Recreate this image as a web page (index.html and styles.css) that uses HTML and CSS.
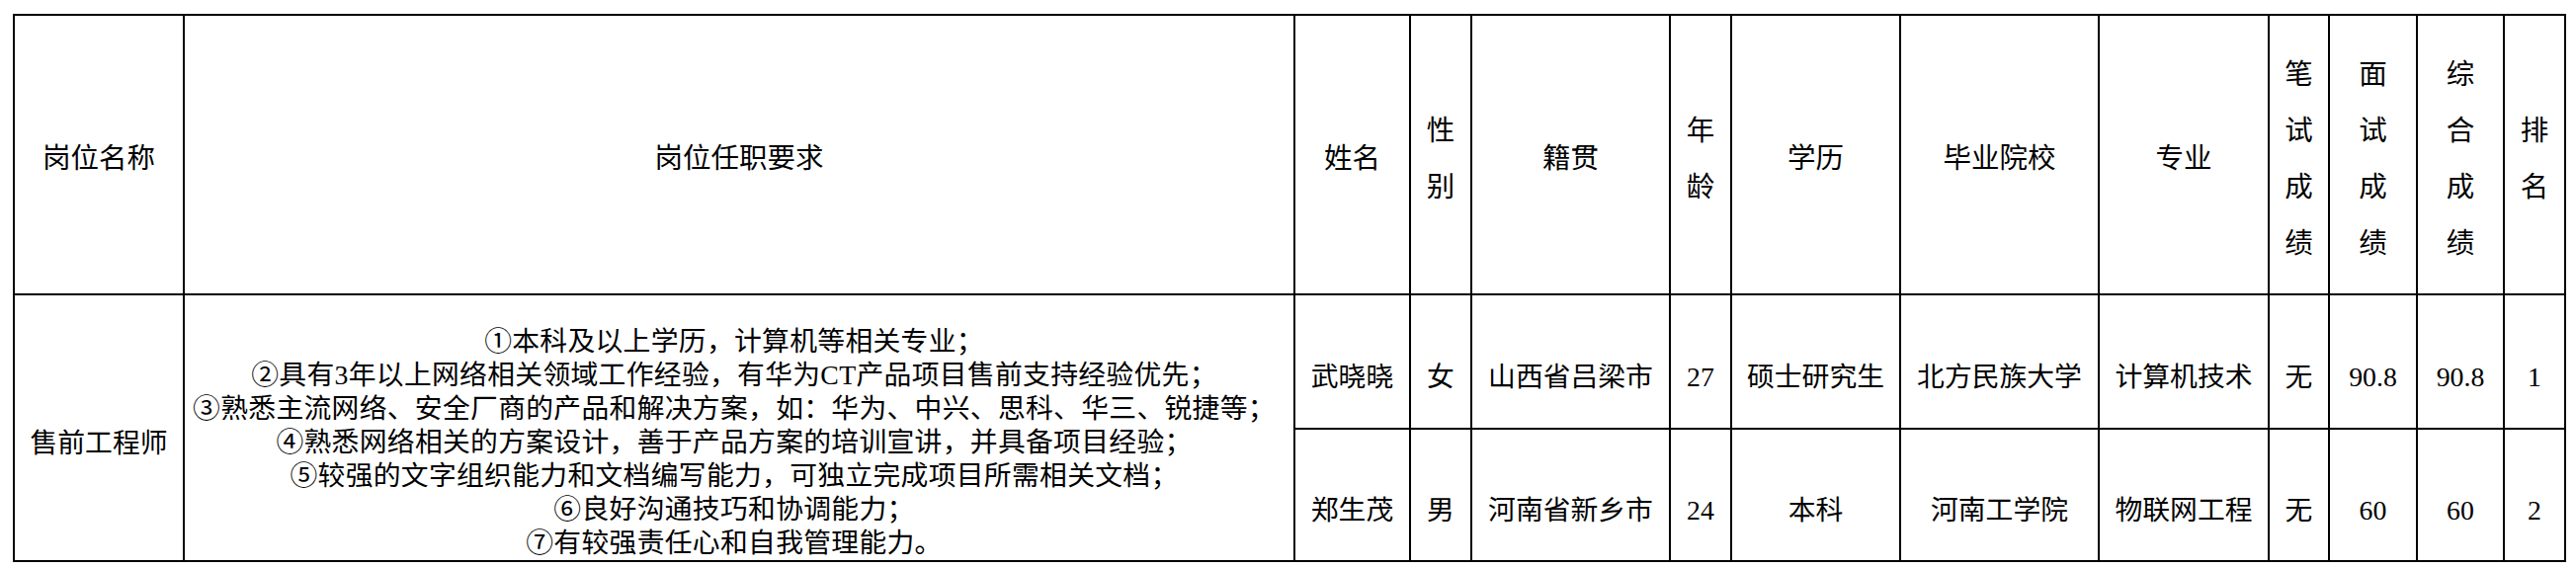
FILE: index.html
```html
<!DOCTYPE html>
<html lang="zh-CN">
<head>
<meta charset="utf-8">
<title>岗位面试成绩</title>
<link rel="stylesheet" href="styles.css">
</head>
<body>
<table class="roster">
  <colgroup>
    <col class="w-post">
    <col class="w-req">
    <col class="w-name">
    <col class="w-sex">
    <col class="w-origin">
    <col class="w-age">
    <col class="w-edu">
    <col class="w-school">
    <col class="w-major">
    <col class="w-written">
    <col class="w-interview">
    <col class="w-total">
    <col class="w-rank">
  </colgroup>
  <thead>
    <tr class="head">
      <th>岗位名称</th>
      <th>岗位任职要求</th>
      <th>姓名</th>
      <th><span class="stack">性别</span></th>
      <th>籍贯</th>
      <th><span class="stack">年龄</span></th>
      <th>学历</th>
      <th>毕业院校</th>
      <th>专业</th>
      <th><span class="stack">笔试成绩</span></th>
      <th><span class="stack">面试成绩</span></th>
      <th><span class="stack">综合成绩</span></th>
      <th><span class="stack">排名</span></th>
    </tr>
  </thead>
  <tbody>
    <tr class="row-a">
      <td rowspan="2" class="merged">售前工程师</td>
      <td rowspan="2" class="merged req">①本科及以上学历，计算机等相关专业；<br>②具有3年以上网络相关领域工作经验，有华为CT产品项目售前支持经验优先；<br>③熟悉主流网络、安全厂商的产品和解决方案，如：华为、中兴、思科、华三、锐捷等；<br>④熟悉网络相关的方案设计，善于产品方案的培训宣讲，并具备项目经验；<br>⑤较强的文字组织能力和文档编写能力，可独立完成项目所需相关文档；<br>⑥良好沟通技巧和协调能力；<br>⑦有较强责任心和自我管理能力。</td>
      <td>武晓晓</td>
      <td>女</td>
      <td>山西省吕梁市</td>
      <td>27</td>
      <td>硕士研究生</td>
      <td>北方民族大学</td>
      <td>计算机技术</td>
      <td>无</td>
      <td>90.8</td>
      <td>90.8</td>
      <td>1</td>
    </tr>
    <tr class="row-b">
      <td>郑生茂</td>
      <td>男</td>
      <td>河南省新乡市</td>
      <td>24</td>
      <td>本科</td>
      <td>河南工学院</td>
      <td>物联网工程</td>
      <td>无</td>
      <td>60</td>
      <td>60</td>
      <td>2</td>
    </tr>
  </tbody>
</table>
</body>
</html>
```

FILE: styles.css
```css
html, body {
  margin: 0;
  padding: 0;
  background: #ffffff;
}

.roster {
  width: 2584px;
  border-collapse: collapse;
  table-layout: fixed;
  margin: 14px 0 0 13px;
  font-family: "Liberation Serif", "Noto Sans CJK SC", serif;
  color: #000000;
  text-spacing-trim: space-all;
}

.w-post { width: 172px; }
.w-req { width: 1124px; }
.w-name { width: 117px; }
.w-sex { width: 62px; }
.w-origin { width: 201px; }
.w-age { width: 62px; }
.w-edu { width: 171px; }
.w-school { width: 201px; }
.w-major { width: 172px; }
.w-written { width: 61px; }
.w-interview { width: 89px; }
.w-total { width: 88px; }
.w-rank { width: 62px; }

.roster th,
.roster td {
  border: 2px solid #000000;
  text-align: center;
  vertical-align: middle;
  font-weight: normal;
  white-space: nowrap;
}

.head {
  height: 283px;
}

.head th {
  padding: 8px 0 0 0;
  font-size: 28.5px;
  line-height: 34px;
}

.stack {
  display: block;
  width: 1.2em;
  margin: 0 auto;
  line-height: 57px;
  white-space: normal;
}

.row-a {
  height: 136px;
}

.row-b {
  height: 134px;
}

.roster td {
  padding: 32px 0 0 0;
  font-size: 27.8px;
  line-height: 34px;
}

.roster td.req {
  padding: 30px 10px 0 0;
  letter-spacing: 0.3px;
}
```
